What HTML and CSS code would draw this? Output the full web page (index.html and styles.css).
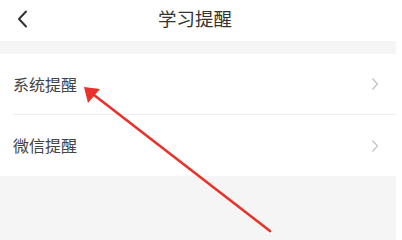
FILE: index.html
```html
<!DOCTYPE html>
<html lang="zh">
<head>
<meta charset="utf-8">
<link rel="stylesheet" href="styles.css">
</head>
<body>
<div class="page">
  <header class="nav">
    <svg class="back" width="12" height="18" viewBox="0 0 12 18"><polyline points="9,1.5 2,9 9,16.5" fill="none" stroke="#333" stroke-width="2" stroke-linecap="round" stroke-linejoin="round"/></svg>
    <h1 class="title">学习提醒</h1>
  </header>
  <div class="band"></div>
  <ul class="list">
    <li class="row"><span class="label">系统提醒</span><svg class="chev" width="8" height="14" viewBox="0 0 8 14"><polyline points="1.5,1.5 6.5,7 1.5,12.5" fill="none" stroke="#c4c4c4" stroke-width="1.3"/></svg></li>
    <li class="row"><span class="label">微信提醒</span><svg class="chev" width="8" height="14" viewBox="0 0 8 14"><polyline points="1.5,1.5 6.5,7 1.5,12.5" fill="none" stroke="#c4c4c4" stroke-width="1.3"/></svg></li>
  </ul>
  <div class="rest"></div>
  <svg class="arrow" width="402" height="240" viewBox="0 0 402 240">
    <line x1="270" y1="231" x2="94" y2="95" stroke="#e8322b" stroke-width="2.6" stroke-linecap="round"/>
    <polygon points="84,87 88,103 100,89" fill="#e8322b"/>
  </svg>
</div>
</body>
</html>
```
FILE: styles.css
```css
html, body {
  margin: 0;
  padding: 0;
  background: #ffffff;
}
body {
  width: 402px;
  height: 240px;
  overflow: hidden;
  font-family: "Noto Sans CJK SC", "Noto Sans", sans-serif;
}
.page {
  position: relative;
  width: 396px;
  height: 240px;
  display: flex;
  flex-direction: column;
  background: #f5f5f5;
}
.nav {
  height: 41px;
  flex: none;
  background: #fff;
  display: flex;
  align-items: center;
  justify-content: center;
  position: relative;
}
.back {
  position: absolute;
  left: 17px;
  top: 10px;
}
.title {
  margin: 0;
  font-size: 18.5px;
  font-weight: 400;
  color: #333;
  line-height: 1;
  margin-top: -4px;
  padding-right: 6px;
}
.band {
  height: 13px;
  flex: none;
}
.list {
  list-style: none;
  margin: 0;
  padding: 0;
  background: #fff;
}
.row {
  height: 60px;
  margin-left: 13px;
  padding-right: 17px;
  display: flex;
  align-items: center;
  justify-content: space-between;
}
.row + .row {
  border-top: 1px solid #eeeeee;
  height: 61px;
}
.label {
  font-size: 16px;
  color: #444;
  line-height: 1;
  margin-top: -1px;
}
.chev {
  display: block;
}
.rest {
  flex: 1;
}
.arrow {
  position: absolute;
  left: 0;
  top: 0;
  pointer-events: none;
}
```
